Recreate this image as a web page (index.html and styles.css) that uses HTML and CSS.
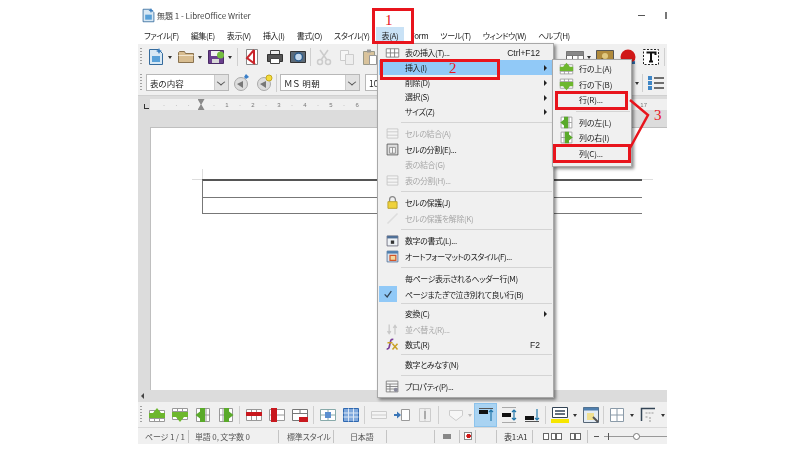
FILE: index.html
```html
<!DOCTYPE html>
<html lang="ja">
<head>
    <meta charset="UTF-8">
    <title>無題 1 - LibreOffice Writer</title>
    <link rel="stylesheet" href="styles.css">
</head>
<body>
    <svg class="defs" width="0" height="0">
        <symbol id="grid" viewBox="0 0 18 18">
            <path d="M1.5 4.5h15v10h-15zM1.5 9.5h15M6.5 4.5v10M11.5 4.5v10" fill="#fff" stroke="#777"/>
        </symbol>
        <symbol id="rowUp" viewBox="0 0 18 18">
            <path d="M1.5 4.5h15v11h-15zM1.5 12.5h15M6.5 4.5v11M11.5 4.5v11" fill="#fff" stroke="#999"/>
            <path d="M1 7h16v5H1zM9 2l4 5H5z" fill="#6db72e"/>
        </symbol>
        <symbol id="rowDown" viewBox="0 0 18 18">
            <path d="M1.5 2.5h15v11h-15zM1.5 5.5h15M6.5 2.5v11M11.5 2.5v11" fill="#fff" stroke="#999"/>
            <path d="M1 6h16v5H1zM9 16l4-5H5z" fill="#6db72e"/>
        </symbol>
        <symbol id="colLeft" viewBox="0 0 18 18">
            <path d="M2.5 2.5h13v13h-13zM2.5 9h13M12 2.5v13" fill="#fff" stroke="#999"/>
            <path d="M6 2h5v14H6zM1.5 9L6 5.5v7z" fill="#5aaa2a"/>
        </symbol>
        <symbol id="colRight" viewBox="0 0 18 18">
            <path d="M2.5 2.5h13v13h-13zM2.5 9h13M6 2.5v13" fill="#fff" stroke="#999"/>
            <path d="M7 2h5v14H7zM16.5 9L12 5.5v7z" fill="#5aaa2a"/>
        </symbol>
        <symbol id="cellMerge" viewBox="0 0 18 18">
            <path d="M2.5 3.5h13v11h-13zM2.5 7h13M2.5 11h13" fill="#f4f4f4" stroke="#c4c4c4"/>
        </symbol>
        <symbol id="cellSplit" viewBox="0 0 18 18">
            <path d="M2.5 2.5h13v13h-13z" fill="#ddd" stroke="#555"/>
            <path d="M5.5 6.5h7v7h-7zM9 6.5v7" fill="#f4f4f4" stroke="#888"/>
        </symbol>
        <symbol id="lock" viewBox="0 0 18 18">
            <path d="M5.5 8V5.5a3.5 3.5 0 0 1 7 0V8" fill="none" stroke="#888" stroke-width="1.5"/>
            <path d="M3.5 8h11v8h-11z" fill="#efd23c" stroke="#b39a20"/>
        </symbol>
        <symbol id="numFormat" viewBox="0 0 18 18">
            <path d="M2.5 3.5h13v12h-13z" fill="#eef2f6" stroke="#667"/>
            <path d="M2.5 3.5h13v3h-13z" fill="#4f6f96"/>
            <path d="M7 9h4v4H7z" fill="#333"/>
        </symbol>
        <symbol id="autoFormat" viewBox="0 0 18 18">
            <path d="M2.5 2.5h13v13h-13z" fill="#dbe7f2" stroke="#4f6f96"/>
            <path d="M2.5 2.5h13v3h-13z" fill="#4f7fae"/>
            <path d="M6 7.5h7v6H6z" fill="#f2d9a0" stroke="#d2562a" stroke-width="1.5"/>
        </symbol>
        <symbol id="sort" viewBox="0 0 18 18">
            <path d="M5 3v10M3 11l2 3 2-3M12 15V5M10 7l2-3 2 3" fill="none" stroke="#c8c8c8" stroke-width="1.5"/>
        </symbol>
        <symbol id="formula" viewBox="0 0 18 18">
            <path d="M2 14c3 1 3-2 4-6s1-6 4-5" fill="none" stroke="#7a3f9a" stroke-width="2"/>
            <path d="M3 7h6M9 8l6 7M15 8l-6 7" fill="none" stroke="#c9a227" stroke-width="1.8"/>
        </symbol>
        <symbol id="props" viewBox="0 0 18 18">
            <path d="M1.5 2.5h14v13h-14zM1.5 6h14M6 6v9.5M1.5 9h14M1.5 12h14" fill="#f6f6f6" stroke="#777"/>
            <circle cx="13" cy="13" r="2.5" fill="#889"/>
        </symbol>
        <symbol id="newDoc" viewBox="0 0 18 18">
            <path d="M2.5 1.5h9l4 4v11h-13z" fill="#d8e8f4" stroke="#346a9c"/>
            <path d="M5 8h8v6H5z" fill="#58a0d8"/>
            <path d="M12 0l1 2 2 1-2 1-1 2-1-2-2-1 2-1z" fill="#3b7fc0"/>
        </symbol>
        <symbol id="folder" viewBox="0 0 18 18">
            <path d="M1.5 4.5v10h15v-9h-8l-1-2h-5z" fill="#d8bd90" stroke="#8a7350"/>
            <path d="M1.5 7.5h15" stroke="#f2e6d0"/>
        </symbol>
        <symbol id="save" viewBox="0 0 18 18">
            <path d="M1.5 2.5h15v13h-15z" fill="#6a3f8e" stroke="#4a2a66"/>
            <path d="M4 3h9v5H4z" fill="#f2f2f2"/>
            <path d="M5 11h7v4H5z" fill="#d8d8d8"/>
            <circle cx="13.5" cy="7" r="3.5" fill="#73bd3f"/>
        </symbol>
        <symbol id="pdf" viewBox="0 0 18 18">
            <path d="M3.5 1.5h11v15h-11z" fill="#fff" stroke="#888"/>
            <path d="M11 2L4 10l8 6M11 2v14" fill="none" stroke="#c9252b" stroke-width="2"/>
        </symbol>
        <symbol id="print" viewBox="0 0 18 18">
            <path d="M4.5 2.5h9v4h-9z" fill="#eee" stroke="#444"/>
            <path d="M1.5 6.5h15v7h-15z" fill="#555" stroke="#333"/>
            <path d="M4.5 10.5h9v5h-9z" fill="#fff" stroke="#444"/>
        </symbol>
        <symbol id="preview" viewBox="0 0 18 18">
            <path d="M1.5 3.5h15v11h-15z" fill="#5c6a78" stroke="#333"/>
            <circle cx="9.5" cy="9" r="4" fill="#c4d8ec" stroke="#2b5c8c" stroke-width="1.5"/>
        </symbol>
        <symbol id="cut" viewBox="0 0 18 18">
            <path d="M5 2l7 10M13 2L6 12" stroke="#ccc" stroke-width="1.5"/>
            <circle cx="5" cy="14" r="2.5" fill="none" stroke="#ccc" stroke-width="1.5"/>
            <circle cx="13" cy="14" r="2.5" fill="none" stroke="#ccc" stroke-width="1.5"/>
        </symbol>
        <symbol id="copy" viewBox="0 0 18 18">
            <path d="M2.5 2.5h8v10h-8z" fill="#f6f6f6" stroke="#ccc"/>
            <path d="M7.5 6.5h8v10h-8z" fill="#eee" stroke="#ccc"/>
        </symbol>
        <symbol id="paste" viewBox="0 0 18 18">
            <path d="M2.5 3.5h11v13h-11z" fill="#d9c39c" stroke="#998"/>
            <path d="M6 1.5h4v3H6z" fill="#999"/>
            <path d="M8.5 7.5h7v9h-7z" fill="#fff" stroke="#999"/>
        </symbol>
        <symbol id="tableBtn" viewBox="0 0 18 18">
            <path d="M0.5 3.5h17v12h-17zM0.5 7.5h17M0.5 11.5h17M6.5 3.5v12M12 3.5v12" fill="#fff" stroke="#666"/>
            <path d="M0.5 3.5h17v4h-17z" fill="#888"/>
        </symbol>
        <symbol id="image" viewBox="0 0 18 18">
            <path d="M0.5 2.5h17v13h-17z" fill="#b08a3c" stroke="#555"/>
            <circle cx="9" cy="8" r="3" fill="#e0c880"/>
            <path d="M1 15l5-5 4 3 3-2 4 4z" fill="#5d4a22"/>
        </symbol>
        <symbol id="dot" viewBox="0 0 18 18">
            <circle cx="9" cy="9" r="7.5" fill="#d01818"/>
            <path d="M12 14l4-1v3h-4z" fill="#3070b0"/>
        </symbol>
        <symbol id="textBox" viewBox="0 0 18 18">
            <path d="M1.5 1.5h15v15h-15z" fill="#fff" stroke="#222" stroke-dasharray="2 1.5"/>
            <path d="M4.5 4.5h9v2.5M9 4.5v9M7 13.5h4" fill="none" stroke="#111" stroke-width="2"/>
        </symbol>
        <symbol id="list" viewBox="0 0 18 18">
            <path d="M7 4h10M7 9h10M7 14h10" stroke="#444" stroke-width="1.5"/>
            <path d="M1 2h4v4H1zM1 7h4v4H1zM1 12h4v4H1z" fill="#3f86c6"/>
        </symbol>
        <symbol id="paraStyle" viewBox="0 0 18 18">
            <circle cx="9" cy="10" r="6.5" fill="#ddd" stroke="#aaa"/>
            <path d="M5 10l6-3v7z" fill="#777"/>
            <path d="M14 0l1.5 1.5L17 3l-3 2-2-2z" fill="#3a7fc8"/>
        </symbol>
        <symbol id="paraStyleNew" viewBox="0 0 18 18">
            <circle cx="9" cy="10" r="6.5" fill="#ddd" stroke="#aaa"/>
            <path d="M5 10l6-3v7z" fill="#777"/>
            <circle cx="14" cy="4" r="3" fill="#f4dc3a" stroke="#c4a820"/>
        </symbol>
        <symbol id="delRow" viewBox="0 0 18 18">
            <path d="M1.5 3.5h15v11h-15zM6.5 3.5v11M11.5 3.5v11" fill="#fff" stroke="#999"/>
            <path d="M1 6h16v4H1z" fill="#c8181e"/>
        </symbol>
        <symbol id="delCol" viewBox="0 0 18 18">
            <path d="M1.5 3.5h15v11h-15zM1.5 9h15" fill="#fff" stroke="#999"/>
            <path d="M3 2h6v14H3z" fill="#c8181e"/>
        </symbol>
        <symbol id="delTable" viewBox="0 0 18 18">
            <path d="M1.5 3.5h15v11h-15zM1.5 7.5h15M9 3.5v4" fill="#fff" stroke="#777"/>
            <path d="M8 11h9v5H8z" fill="#c8181e"/>
        </symbol>
        <symbol id="blueBox" viewBox="0 0 18 18">
            <path d="M1.5 3.5h15v11h-15zM1.5 9h15M9 3.5v11" fill="#fff" stroke="#8aa"/>
            <path d="M6 6h6v6H6z" fill="#5b8fd0"/>
        </symbol>
        <symbol id="blueGrid" viewBox="0 0 18 18">
            <path d="M1.5 2.5h15v13h-15z" fill="#7fa8dc" stroke="#2f68b0"/>
            <path d="M1.5 7h15M1.5 11h15M6.5 2.5v13M11.5 2.5v13" stroke="#dce8f6"/>
        </symbol>
        <symbol id="grayRows" viewBox="0 0 18 18">
            <path d="M1.5 5.5h15v7h-15zM1.5 9h15" fill="#f4f4f4" stroke="#ccc"/>
        </symbol>
        <symbol id="arrowCol" viewBox="0 0 18 18">
            <path d="M1 9h6" stroke="#3a76b8" stroke-width="2"/>
            <path d="M4 5.5L8 9l-4 3.5z" fill="#3a76b8"/>
            <path d="M8.5 3.5h8v11h-8z" fill="#fff" stroke="#999"/>
        </symbol>
        <symbol id="grayCols" viewBox="0 0 18 18">
            <path d="M3.5 2.5h11v13h-11zM9 2.5v13" fill="#eee" stroke="#ccc"/>
            <path d="M9 5v8" stroke="#aaa" stroke-width="2"/>
        </symbol>
        <symbol id="shield" viewBox="0 0 18 18">
            <path d="M2.5 4.5h13v5l-6.5 5-6.5-5z" fill="#f6f6f6" stroke="#ccc"/>
        </symbol>
        <symbol id="alignTop" viewBox="0 0 18 18">
            <path d="M2 4h9v4H2z" fill="#111"/>
            <path d="M2 2.5h14" stroke="#555"/>
            <path d="M14 15V4M12 6l2-2 2 2" fill="none" stroke="#27a" stroke-width="1.2"/>
        </symbol>
        <symbol id="alignMid" viewBox="0 0 18 18">
            <path d="M2 7h9v4H2z" fill="#111"/>
            <path d="M2 1.5h14M2 16.5h14" stroke="#aaa"/>
            <path d="M14 4v10M12 6l2-2 2 2M12 12l2 2 2-2" fill="none" stroke="#27a" stroke-width="1.2"/>
        </symbol>
        <symbol id="alignBottom" viewBox="0 0 18 18">
            <path d="M2 10h9v4H2z" fill="#111"/>
            <path d="M2 15.5h14" stroke="#555"/>
            <path d="M14 3v11M12 12l2 2 2-2" fill="none" stroke="#27a" stroke-width="1.2"/>
        </symbol>
        <symbol id="cellColor" viewBox="0 0 18 18">
            <path d="M1.5 1.5h15v10h-15z" fill="#fff" stroke="#345"/>
            <path d="M4 5h10M4 8h10" stroke="#345" stroke-width="1.5"/>
            <path d="M0 13h18v4H0z" fill="#f6e600"/>
        </symbol>
        <symbol id="tableProps" viewBox="0 0 18 18">
            <path d="M1.5 1.5h15v15h-15z" fill="#e4ecf4" stroke="#567"/>
            <path d="M1.5 1.5h15v3h-15z" fill="#4f7fae"/>
            <path d="M5 7h7v7H5z" fill="#f0e090"/>
            <path d="M11 11l5 5" stroke="#555" stroke-width="2"/>
        </symbol>
        <symbol id="borders" viewBox="0 0 18 18">
            <path d="M2.5 2.5h13v13h-13zM2.5 9h13M9 2.5v13" fill="#fff" stroke="#8a9aa8"/>
        </symbol>
        <symbol id="borderStyle" viewBox="0 0 18 18">
            <path d="M2.5 15V2.5H16" fill="none" stroke="#345" stroke-width="1.5"/>
            <path d="M6.5 7h9M6.5 11h2M11 11v5" stroke="#999" stroke-dasharray="2 1"/>
        </symbol>
    </svg>

    <div class="window">
        <div class="titlebar">
            <svg class="ic small"><use href="#newDoc"/></svg>
            <span class="title">無題 1 - LibreOffice Writer</span>
            <span class="minimize"></span>
            <span class="maximize"></span>
        </div>

        <div class="menubar">
            <span>ファイル(F)</span>
            <span>編集(E)</span>
            <span>表示(V)</span>
            <span>挿入(I)</span>
            <span>書式(O)</span>
            <span>スタイル(Y)</span>
            <span class="open">表(A)</span>
            <span>Form</span>
            <span>ツール(T)</span>
            <span>ウィンドウ(W)</span>
            <span>ヘルプ(H)</span>
        </div>

        <div class="toolbar">
            <i class="grip"></i>
            <span class="slot narrow"><svg class="ic"><use href="#newDoc"/></svg></span><b class="drop"></b>
            <span class="slot narrow"><svg class="ic"><use href="#folder"/></svg></span><b class="drop"></b>
            <span class="slot narrow"><svg class="ic"><use href="#save"/></svg></span><b class="drop short"></b>
            <i class="sep lean"></i>
            <span class="slot"><svg class="ic"><use href="#pdf"/></svg></span>
            <span class="slot"><svg class="ic"><use href="#print"/></svg></span>
            <span class="slot"><svg class="ic"><use href="#preview"/></svg></span>
            <i class="sep tight"></i>
            <span class="slot"><svg class="ic"><use href="#cut"/></svg></span>
            <span class="slot"><svg class="ic"><use href="#copy"/></svg></span>
            <span class="slot"><svg class="ic"><use href="#paste"/></svg></span>
            <div class="toolbar-right">
                <span class="slot narrow"><svg class="ic"><use href="#tableBtn"/></svg></span><b class="drop short"></b>
                <span class="slot"><svg class="ic"><use href="#image"/></svg></span>
                <span class="slot"><svg class="ic"><use href="#dot"/></svg></span>
                <span class="slot"><svg class="ic"><use href="#textBox"/></svg></span>
                <i class="sep"></i>
            </div>
        </div>

        <div class="toolbar formatbar">
            <i class="grip"></i>
            <div class="combo style-combo"><span>表の内容</span><em></em></div>
            <span class="slot"><svg class="ic"><use href="#paraStyle"/></svg></span>
            <span class="slot"><svg class="ic"><use href="#paraStyleNew"/></svg></span>
            <i class="sep tight"></i>
            <div class="combo font-combo"><span>ＭＳ 明朝</span><em></em></div>
            <div class="combo size-combo"><span>10</span></div>
            <div class="toolbar-right">
                <b class="drop short"></b>
                <i class="sep tight"></i>
                <span class="slot"><svg class="ic"><use href="#list"/></svg></span>
            </div>
        </div>

        <div class="workspace">
            <div class="ruler-row">
                <span class="tab-corner"></span>
                <div class="ruler">
                    <span>·</span><span>·</span><span>·</span>
                    <span class="margin-mark"></span>
                    <span>·</span><span>1</span><span>·</span><span>2</span><span>·</span><span>3</span><span>·</span><span>4</span><span>·</span><span>5</span><span>·</span><span>6</span>
                    <span class="ruler-end">17</span>
                </div>
            </div>
            <div class="page">
                <div class="crop-marks"></div>
                <div class="doc-table">
                    <div class="doc-row"></div>
                    <div class="doc-row"></div>
                </div>
            </div>
        </div>

        <div class="scrollbar"><span class="scroll-left"></span></div>

        <div class="toolbar tablebar">
            <i class="grip"></i>
            <span class="slot"><svg class="ic"><use href="#rowUp"/></svg></span>
            <span class="slot"><svg class="ic"><use href="#rowDown"/></svg></span>
            <span class="slot"><svg class="ic"><use href="#colLeft"/></svg></span>
            <span class="slot"><svg class="ic"><use href="#colRight"/></svg></span>
            <i class="sep"></i>
            <span class="slot"><svg class="ic"><use href="#delRow"/></svg></span>
            <span class="slot"><svg class="ic"><use href="#delCol"/></svg></span>
            <span class="slot"><svg class="ic"><use href="#delTable"/></svg></span>
            <i class="sep"></i>
            <span class="slot"><svg class="ic"><use href="#blueBox"/></svg></span>
            <span class="slot"><svg class="ic"><use href="#blueGrid"/></svg></span>
            <i class="sep"></i>
            <span class="slot"><svg class="ic"><use href="#grayRows"/></svg></span>
            <span class="slot"><svg class="ic"><use href="#arrowCol"/></svg></span>
            <span class="slot"><svg class="ic"><use href="#grayCols"/></svg></span>
            <i class="sep"></i>
            <span class="slot narrow shield-slot"><svg class="ic"><use href="#shield"/></svg></span><b class="drop short faint"></b>
            <span class="slot active"><svg class="ic"><use href="#alignTop"/></svg></span>
            <span class="slot"><svg class="ic"><use href="#alignMid"/></svg></span>
            <span class="slot"><svg class="ic"><use href="#alignBottom"/></svg></span>
            <i class="sep"></i>
            <span class="slot"><svg class="ic"><use href="#cellColor"/></svg></span><b class="drop short"></b>
            <span class="slot"><svg class="ic"><use href="#tableProps"/></svg></span>
            <i class="sep tight"></i>
            <span class="slot"><svg class="ic"><use href="#borders"/></svg></span><b class="drop short"></b>
            <span class="slot"><svg class="ic"><use href="#borderStyle"/></svg></span><b class="drop short"></b>
        </div>

        <div class="statusbar">
            <span class="st st-page">ページ 1 / 1</span>
            <span class="st st-words">単語 0, 文字数 0</span>
            <span class="st st-style">標準スタイル</span>
            <span class="st st-lang">日本語</span>
            <span class="st st-a"></span>
            <span class="st st-b"><i class="gray-chip"></i></span>
            <span class="st st-c"><i class="red-chip"></i></span>
            <span class="st st-d"></span>
            <span class="st st-cell">表1:A1</span>
            <span class="st st-view"><i class="pg single"></i><i class="pg"></i><i class="pg end"></i><i class="pg"></i><i class="pg"></i></span>
            <span class="zoom"><i class="minus"></i><i class="track"><i class="plus"></i><i class="knob"></i></i></span>
        </div>
    </div>

    <!-- 表 menu -->
    <div class="menu">
        <div class="item tight"><span class="mi"><svg class="ic small"><use href="#grid"/></svg></span><span>表の挿入(T)...</span><kbd>Ctrl+F12</kbd></div>
        <div class="item tight hover"><span class="mi"></span><span>挿入(I)</span><u></u></div>
        <div class="item tight"><span class="mi"></span><span>削除(D)</span><u></u></div>
        <div class="item tight"><span class="mi"></span><span>選択(S)</span><u></u></div>
        <div class="item tight"><span class="mi"></span><span>サイズ(Z)</span><u></u></div>
        <hr>
        <div class="item off"><span class="mi"><svg class="ic small"><use href="#cellMerge"/></svg></span><span>セルの結合(A)</span></div>
        <div class="item"><span class="mi"><svg class="ic small"><use href="#cellSplit"/></svg></span><span>セルの分割(E)...</span></div>
        <div class="item off"><span class="mi"></span><span>表の結合(G)</span></div>
        <div class="item off"><span class="mi"><svg class="ic small"><use href="#cellMerge"/></svg></span><span>表の分割(H)...</span></div>
        <hr>
        <div class="item"><span class="mi"><svg class="ic small"><use href="#lock"/></svg></span><span>セルの保護(J)</span></div>
        <div class="item off"><span class="mi"><svg class="ic small" viewBox="0 0 18 18"><path d="M3 15L15 3" stroke="#ddd" stroke-width="2"/></svg></span><span>セルの保護を解除(K)</span></div>
        <hr>
        <div class="item"><span class="mi"><svg class="ic small"><use href="#numFormat"/></svg></span><span>数字の書式(L)...</span></div>
        <div class="item"><span class="mi"><svg class="ic small"><use href="#autoFormat"/></svg></span><span>オートフォーマットのスタイル(F)...</span></div>
        <hr>
        <div class="item"><span class="mi"></span><span>毎ページ表示されるヘッダー行(M)</span></div>
        <div class="item"><span class="mi checked"><svg class="ic check" viewBox="0 0 12 12"><path d="M2 6.5l3 3 5-7" fill="none" stroke="#345" stroke-width="1.5"/></svg></span><span>ページまたぎで泣き別れて良い行(B)</span></div>
        <hr class="thin">
        <div class="item"><span class="mi"></span><span>変換(C)</span><u></u></div>
        <div class="item off"><span class="mi"><svg class="ic small"><use href="#sort"/></svg></span><span>並べ替え(R)...</span></div>
        <div class="item"><span class="mi"><svg class="ic small"><use href="#formula"/></svg></span><span>数式(R)</span><kbd>F2</kbd></div>
        <hr class="thin">
        <div class="item"><span class="mi"></span><span>数字とみなす(N)</span></div>
        <hr>
        <div class="item"><span class="mi"><svg class="ic small"><use href="#props"/></svg></span><span>プロパティ(P)...</span></div>
    </div>

    <!-- 挿入 submenu -->
    <div class="submenu">
        <div class="item"><span class="mi"><svg class="ic small"><use href="#rowUp"/></svg></span><span>行の上(A)</span></div>
        <div class="item"><span class="mi"><svg class="ic small"><use href="#rowDown"/></svg></span><span>行の下(B)</span></div>
        <div class="item"><span class="mi"></span><span>行(R)...</span></div>
        <hr>
        <div class="item"><span class="mi"><svg class="ic small"><use href="#colLeft"/></svg></span><span>列の左(L)</span></div>
        <div class="item"><span class="mi"><svg class="ic small"><use href="#colRight"/></svg></span><span>列の右(I)</span></div>
        <div class="item"><span class="mi"></span><span>列(C)...</span></div>
    </div>

    <!-- annotations drawn over the screenshot -->
    <div class="mark mark-table"></div>
    <div class="mark mark-insert"></div>
    <div class="mark mark-row"></div>
    <div class="mark mark-col"></div>
    <span class="num num-1">1</span>
    <span class="num num-2">2</span>
    <span class="num num-3">3</span>
    <svg class="pointer" width="30" height="60" viewBox="0 0 30 60">
        <path d="M1 2L19 17L1 50" fill="none" stroke="#e8141c" stroke-width="2.5"/>
    </svg>
</body>
</html>
```

FILE: styles.css
```css
* {
    box-sizing: border-box;
}

body {
    margin: 0;
    width: 800px;
    height: 450px;
    overflow: hidden;
    position: relative;
    background-color: #ffffff;
    color: #222222;
    font-family: "Noto Sans CJK JP", "Liberation Sans", sans-serif;
    font-feature-settings: "palt";
    font-size: 8px;
}

.defs {
    position: absolute;
}

.window {
    width: 529px;
    height: 444px;
    margin-left: 138px;
    display: flex;
    flex-direction: column;
    background-color: #f0f0f0;
    overflow: hidden;
    filter: blur(0.35px);
}

.ic {
    width: 18px;
    height: 18px;
    display: block;
}

.ic.small {
    width: 15px;
    height: 15px;
}

.ic.check {
    width: 10px;
    height: 10px;
}

.titlebar {
    height: 27px;
    flex: none;
    display: flex;
    align-items: center;
    padding: 3px 0 0 3px;
    background-color: #ffffff;
}

.title {
    margin-left: 1px;
    color: #444444;
}

.minimize {
    width: 7px;
    height: 1px;
    margin-left: auto;
    margin-right: 20px;
    background-color: #555555;
}

.maximize {
    width: 2px;
    height: 7px;
    background-color: #777777;
}

.menubar {
    height: 17px;
    flex: none;
    display: flex;
    align-items: center;
    background-color: #ffffff;
    letter-spacing: -0.4px;
}

.menubar span {
    padding: 0 6px;
    line-height: 17px;
    white-space: nowrap;
}

.menubar .open {
    background-color: #c9e2f6;
}

.toolbar {
    flex: none;
    height: 26px;
    display: flex;
    align-items: center;
    background-color: #f0f0f0;
}

.formatbar {
    height: 25px;
}

.toolbar-right {
    margin-left: auto;
    display: flex;
    align-items: center;
}

.grip {
    width: 2px;
    height: 18px;
    margin: 0 4px 0 2px;
    background-image: linear-gradient(#a0a0a0 50%, transparent 50%);
    background-size: 2px 3px;
}

.tablebar .grip {
    margin-right: 3.5px;
}

.slot {
    width: 23px;
    height: 24px;
    flex: none;
    display: flex;
    align-items: center;
    justify-content: center;
}

.slot.narrow {
    width: 20px;
}

.slot.active {
    background-color: #a9d3f2;
    border: 1px solid #8cc3ec;
}

.shield-slot {
    margin-left: 5px;
}

.drop {
    width: 10px;
    height: 10px;
    flex: none;
    position: relative;
}

.drop.short {
    width: 8px;
}

.drop::after {
    content: "";
    position: absolute;
    left: 2px;
    top: 4px;
    border: 2px solid transparent;
    border-top: 3px solid #333333;
    border-bottom: 0;
}

.drop.faint::after {
    border-top-color: #bbbbbb;
}

.sep {
    width: 1px;
    height: 18px;
    flex: none;
    margin: 0 2px;
    background-color: #cfcfcf;
}

.sep.lean {
    margin: 0 2px 0 3px;
}

.sep.tight {
    margin: 0 1px;
}

.combo {
    height: 17px;
    flex: none;
    display: flex;
    align-items: center;
    justify-content: space-between;
    padding-left: 3px;
    background-color: #ffffff;
    border: 1px solid #b8b8b8;
    font-size: 8.5px;
}

.combo em {
    width: 14px;
    height: 15px;
    background-color: #e2e2e2;
    border-left: 1px solid #cccccc;
    position: relative;
}

.combo em::after {
    content: "";
    position: absolute;
    left: 3px;
    top: 4px;
    width: 5px;
    height: 5px;
    border-right: 1px solid #555555;
    border-bottom: 1px solid #555555;
    transform: scale(1, 0.8) rotate(45deg);
}

.style-combo {
    width: 83px;
}

.font-combo {
    width: 80px;
    margin-left: 2px;
    letter-spacing: 0.5px;
}

.size-combo {
    width: 30px;
    margin-left: 5px;
}

.workspace {
    flex: 1;
    min-height: 0;
    display: flex;
    flex-direction: column;
    background-color: #dcdcdc;
    border-top: 1px solid #d0d0d0;
}

.ruler-row {
    height: 31px;
    flex: none;
    display: flex;
    padding-top: 3px;
}

.tab-corner {
    width: 5px;
    height: 5px;
    margin: 5px 1px 0 6px;
    border-left: 1px solid #333333;
    border-bottom: 1px solid #333333;
}

.ruler {
    flex: 1;
    height: 11px;
    display: flex;
    align-items: center;
    gap: 10.35px;
    padding-left: 13px;
    background-color: #f0f0f0;
    color: #777777;
    font-family: "Liberation Sans", sans-serif;
    font-size: 6px;
}

.margin-mark {
    width: 7px;
    height: 11px;
    flex: none;
    margin: 0 -2px 0 -2.5px;
    background-color: #8a8a8a;
    clip-path: polygon(0 0, 100% 0, 55% 50%, 100% 100%, 0 100%, 45% 50%);
}

.ruler-end {
    margin-left: auto;
    margin-right: 20px;
}

.page {
    flex: 1;
    margin-left: 12px;
    position: relative;
    padding: 51px 25px 0 51px;
    background-color: #ffffff;
    border-top: 1px solid #bfbfbf;
    border-left: 1px solid #bfbfbf;
}

.crop-marks {
    position: absolute;
    left: 41px;
    top: 41px;
    width: 461px;
    height: 11px;
    border-bottom: 1px solid #dddddd;
}

.crop-marks::before {
    content: "";
    position: absolute;
    left: 10px;
    top: 0;
    width: 1px;
    height: 10px;
    background-color: #dddddd;
}

.doc-table {
    border-top: 2px solid #555555;
    border-left: 1px solid #777777;
    position: relative;
}

.doc-row {
    height: 16.5px;
    border-bottom: 1px solid #777777;
}

.scrollbar {
    height: 12px;
    flex: none;
    display: flex;
    align-items: center;
    padding-left: 3px;
    background-color: #dcdcdc;
}

.scroll-left {
    width: 0;
    height: 0;
    border: 3px solid transparent;
    border-right: 3px solid #444444;
    border-left: 0;
}

.tablebar {
    height: 26px;
    border-bottom: 1px solid #d8d8d8;
}

.statusbar {
    height: 16px;
    flex: none;
    display: flex;
    align-items: center;
    background-color: #f0f0f0;
    color: #555555;
    letter-spacing: -0.15px;
    white-space: nowrap;
}

.st {
    height: 13px;
    flex: none;
    display: flex;
    align-items: center;
    border-right: 1px solid #c4c4c4;
}

.st-page {
    width: 51px;
    padding-left: 7px;
}

.st-words {
    width: 90px;
    padding-left: 6px;
}

.st-style {
    width: 55px;
    padding-left: 8px;
}

.st-lang {
    width: 53px;
    padding-left: 16px;
}

.st-a {
    width: 48px;
}

.st-b {
    width: 25px;
    justify-content: center;
}

.st-c {
    width: 16px;
    justify-content: center;
}

.st-d {
    width: 21px;
}

.st-cell {
    width: 36px;
    padding-left: 7px;
    color: #333333;
}

.st-view {
    width: 55px;
    padding-left: 10px;
}

.gray-chip {
    width: 8px;
    height: 5px;
    background-color: #888888;
}

.red-chip {
    width: 8px;
    height: 8px;
    border: 1px solid #888888;
    background: radial-gradient(circle at 60% 50%, #d01818 0 2px, #ffffff 2.5px);
}

.pg {
    width: 5.5px;
    height: 7px;
    border: 1px solid #666666;
    background-color: #ffffff;
}

.pg.single {
    margin-right: 2px;
}

.pg.end {
    margin-right: 8px;
}

.zoom {
    display: flex;
    align-items: center;
    flex: 1;
    padding-left: 6px;
}

.minus {
    width: 5px;
    height: 1px;
    background-color: #555555;
}

.track {
    flex: 1;
    height: 1px;
    margin-left: 5px;
    position: relative;
    background-color: #999999;
}

.plus {
    position: absolute;
    left: 4px;
    top: -3px;
    width: 1px;
    height: 7px;
    background-color: #555555;
}

.knob {
    position: absolute;
    left: 29px;
    top: -3px;
    width: 7px;
    height: 7px;
    border: 1px solid #777777;
    border-radius: 50%;
    background-color: #ffffff;
}

.menu,
.submenu {
    position: absolute;
    display: flex;
    flex-direction: column;
    background-color: #f0f0f0;
    border: 1px solid #a8a8a8;
    box-shadow: 2px 2px 3px rgba(0, 0, 0, 0.45);
    filter: blur(0.35px);
}

.menu {
    left: 377px;
    top: 43px;
    width: 177px;
    height: 355px;
    padding: 1.5px 1px;
    letter-spacing: -0.4px;
}

.submenu {
    left: 552px;
    top: 59px;
    width: 80px;
    height: 108px;
    padding: 1px;
    letter-spacing: -0.2px;
}

.item {
    height: 15.5px;
    flex: none;
    display: flex;
    align-items: center;
    white-space: nowrap;
    position: relative;
}

.item.tight {
    height: 14.7px;
}

.item.hover {
    background-color: #91c9f7;
}

.item.off {
    color: #a8a8a8;
}

.mi {
    width: 26px;
    height: 15.5px;
    flex: none;
    display: flex;
    align-items: center;
    justify-content: center;
}

.mi.checked {
    width: 18px;
    margin-right: 8px;
    background-color: #91c9f7;
}

.submenu .mi {
    width: 25px;
}

kbd {
    margin-left: auto;
    margin-right: 12px;
    font-family: "Liberation Sans", sans-serif;
    font-size: 8.5px;
    letter-spacing: 0;
}

.item u {
    position: absolute;
    right: 5px;
    top: 5px;
    border: 3px solid transparent;
    border-left: 3px solid #222222;
    border-right: 0;
}

hr {
    height: 1px;
    flex: none;
    margin: 3px 0 3px 22px;
    border: 0;
    background-color: #d4d4d4;
}

hr.thin {
    margin: 1.5px 0 1.5px 22px;
}

.mark {
    position: absolute;
    border: 3px solid #e8141c;
}

.mark-table {
    left: 372px;
    top: 8px;
    width: 42px;
    height: 36px;
}

.mark-insert {
    left: 380px;
    top: 59px;
    width: 120px;
    height: 21px;
}

.mark-row {
    left: 555px;
    top: 91px;
    width: 73px;
    height: 19px;
}

.mark-col {
    left: 553px;
    top: 144px;
    width: 78px;
    height: 19px;
}

.num {
    position: absolute;
    color: #e8141c;
    font-family: "Liberation Serif", serif;
    font-size: 15px;
    line-height: 16px;
}

.num-1 {
    left: 385px;
    top: 12px;
}

.num-2 {
    left: 449px;
    top: 60px;
}

.num-3 {
    left: 654px;
    top: 107px;
}

.pointer {
    position: absolute;
    left: 629px;
    top: 98px;
}
```
